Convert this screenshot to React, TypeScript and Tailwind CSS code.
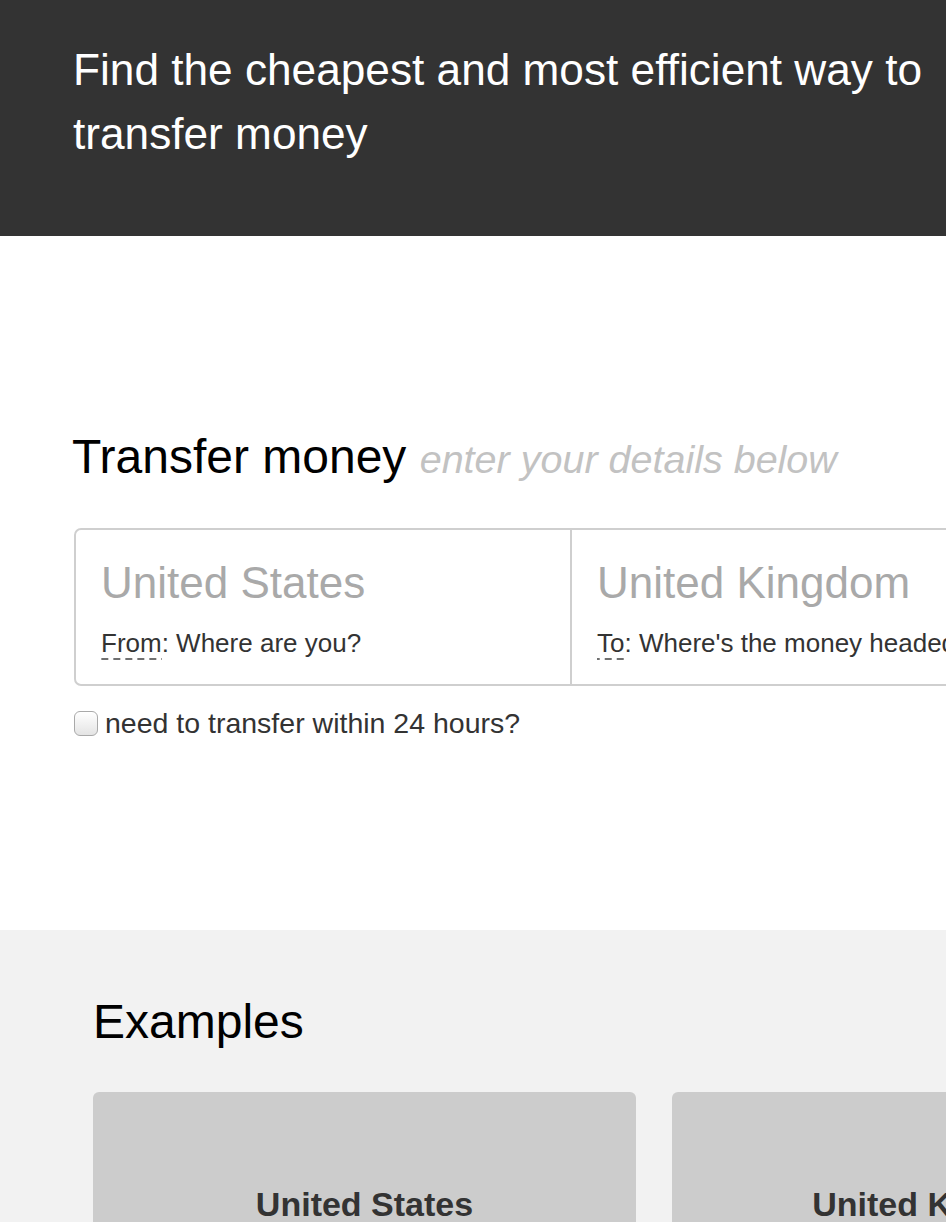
const FONT = "font-['Liberation_Sans',Arial,sans-serif]";

const FIELDS = [
  { country: "United States", label: "From", rest: ": Where are you?" },
  { country: "United Kingdom", label: "To", rest: ": Where's the money headed?" },
];

const EXAMPLES = ["United States", "United Kingdom"];

function Checkbox() {
  return (
    <span className="inline-block h-[25px] w-[24px] shrink-0 rounded-[6px] border border-[#a9a9a9] bg-[linear-gradient(to_bottom,#ffffff,#e4e4e4)] shadow-[inset_0_1px_1px_rgba(255,255,255,0.8)]" />
  );
}

export default function App() {
  return (
    <div className={`w-[946px] overflow-hidden bg-white ${FONT}`}>
      <div className="w-[1100px]">
        {/* Header */}
        <header className="h-[236px] bg-[#333333] px-[73px] pt-[38px]">
          <h1 className="text-[44.2px] leading-[64px] text-white">
            Find the cheapest and most efficient way to transfer money
          </h1>
        </header>

        {/* Transfer form */}
        <section className="h-[694px] px-[74px] pt-[192px]">
          <h2 className="-ml-[2px] text-[48px] leading-[1.2] text-black">
            Transfer money{" "}
            <span className="text-[39.5px] italic text-[#c2c2c2]">enter your details below</span>
          </h2>

          <div className="mt-[42px] flex w-[1000px] rounded-[7px] border-2 border-[#cfcfcf]">
            {FIELDS.map((f, i) => (
              <div
                key={f.country}
                className={`w-[494px] shrink-0 pb-[23px] pl-[25px] pt-[27px] ${i > 0 ? "border-l-2 border-[#cfcfcf]" : ""}`}
              >
                <div className="whitespace-nowrap text-[44px] leading-[1.2] text-[#a9a9a9]">{f.country}</div>
                <div className="mt-[18px] whitespace-nowrap text-[26px] leading-[1.3] text-[#333333]">
                  <span className="bg-[linear-gradient(to_right,#707070_58%,transparent_58%)] bg-[length:12px_2px] bg-bottom bg-repeat-x pb-[2px]">
                    {f.label}
                  </span>
                  {f.rest}
                </div>
              </div>
            ))}
          </div>

          <label className="mt-[20px] flex items-center gap-[7px] text-[28.5px] leading-[1.2] text-[#333333]">
            <Checkbox />
            need to transfer within 24 hours?
          </label>
        </section>

        {/* Examples */}
        <section className="bg-[#f2f2f2] px-[93px] pb-[40px] pt-[63px]">
          <h2 className="text-[48px] leading-[1.2] text-black">Examples</h2>
          <div className="mt-[41px] flex gap-[36px]">
            {EXAMPLES.map((name) => (
              <div key={name} className="h-[260px] w-[543px] shrink-0 rounded-[6px] bg-[#cccccc] pt-[92px] text-center">
                <div className="text-[34px] font-bold leading-[1.2] text-[#333333]">{name}</div>
              </div>
            ))}
          </div>
        </section>
      </div>
    </div>
  );
}
